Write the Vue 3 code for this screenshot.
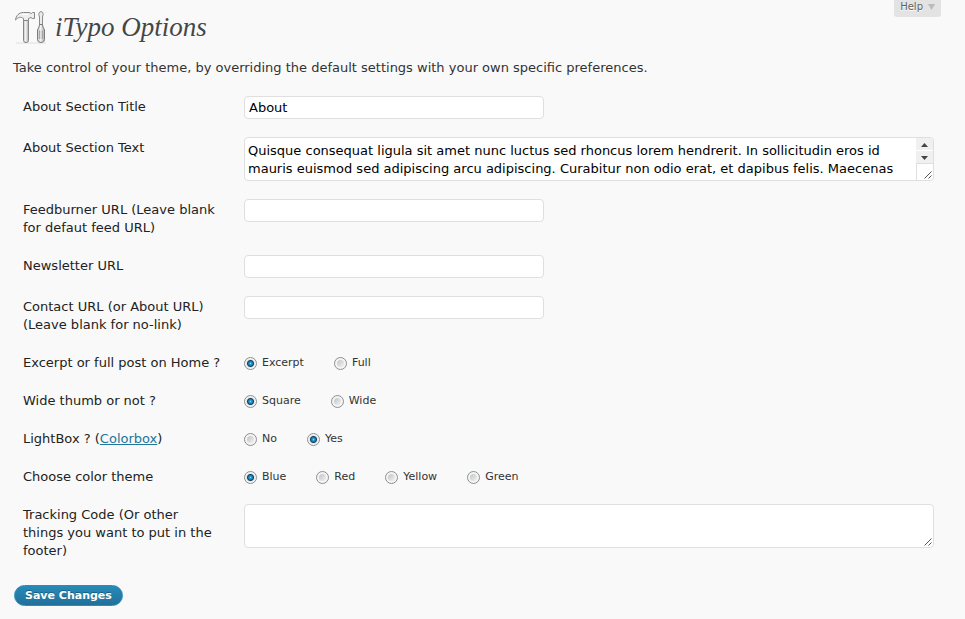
<script setup>
import { reactive } from 'vue'

const form = reactive({
  title: 'About',
  text: 'Quisque consequat ligula sit amet nunc luctus sed rhoncus lorem hendrerit. In sollicitudin eros id mauris euismod sed adipiscing arcu adipiscing. Curabitur non odio erat, et dapibus felis. Maecenas',
  feed: '',
  newsletter: '',
  contact: '',
  excerpt: 'Excerpt',
  thumb: 'Square',
  lightbox: 'Yes',
  color: 'Blue',
  tracking: '',
})

const rows = [
  { id: 'title', type: 'text', label: 'About Section Title' },
  { id: 'text', type: 'area', label: 'About Section Text', scroll: true },
  { id: 'feed', type: 'text', label: 'Feedburner URL (Leave blank for defaut feed URL)' },
  { id: 'newsletter', type: 'text', label: 'Newsletter URL' },
  { id: 'contact', type: 'text', label: 'Contact URL (or About URL) (Leave blank for no-link)' },
  { id: 'excerpt', type: 'radio', label: 'Excerpt or full post on Home ?', options: ['Excerpt', 'Full'] },
  { id: 'thumb', type: 'radio', label: 'Wide thumb or not ?', options: ['Square', 'Wide'] },
  { id: 'lightbox', type: 'radio', label: 'LightBox ?', link: 'Colorbox', options: ['No', 'Yes'] },
  { id: 'color', type: 'radio', label: 'Choose color theme', options: ['Blue', 'Red', 'Yellow', 'Green'] },
  { id: 'tracking', type: 'area', label: 'Tracking Code (Or other things you want to put in the footer)' },
]
</script>

<template>
  <main class="page">
    <button type="button" class="help">
      Help
      <svg width="7" height="6" viewBox="0 0 7 6" aria-hidden="true"><path d="M0 0H7L3.5 6Z" fill="#bbb" /></svg>
    </button>

    <header class="heading">
      <svg class="tools" width="34" height="34" viewBox="0 0 34 34" aria-hidden="true">
        <defs>
          <linearGradient id="metal" x1="0" x2="1" y1="0" y2="0">
            <stop offset="0" stop-color="#c4c4c4" />
            <stop offset="0.45" stop-color="#f4f4f4" />
            <stop offset="1" stop-color="#aaa" />
          </linearGradient>
        </defs>
        <path d="M3 33H33" stroke="#dedede" />
        <path d="M10.500 9.500H15.500V30.500Q15.500 32.500 13 32.500T10.500 30.500Z" fill="url(#metal)" stroke="#858585" />
        <path d="M2.500 10C3 5.500 6 2.500 10.500 2.500H16L18.500 3.500L19.500 2.500H21.500V8.500H19.500L18 7.500L15.500 8.500V10.500H10.500V8.500C7.500 6.500 5.500 7 2.500 10Z" fill="#eee" stroke="#858585" stroke-linejoin="round" />
        <path d="M9 4.500H15" stroke="#fff" />
        <path d="M28 1.500Q30.300 2 30.200 4.500L29.500 7V15H26.500V7L25.800 4.500Q25.700 2 28 1.500Z" fill="#ececec" stroke="#8b8b8b" />
        <path d="M26.500 14.500H29.500L30 17L31.500 20V29.500Q31.500 32.500 28 32.500T24.500 29.500V20L26 17Z" fill="url(#metal)" stroke="#7b7b7b" stroke-linejoin="round" />
        <path d="M26.700 20.500V29M29.300 20.500V29" stroke="#999" />
      </svg>
      <h1>iTypo Options</h1>
    </header>

    <p class="intro">Take control of your theme, by overriding the default settings with your own specific preferences.</p>

    <form @submit.prevent>
      <div v-for="row in rows" :key="row.id" class="row">
        <div v-if="row.type === 'radio'" :id="row.id + '-label'" class="label">
          {{ row.label }}
          <template v-if="row.link">(<a href="#colorbox">{{ row.link }}</a>)</template>
        </div>
        <label v-else class="label" :for="row.id">{{ row.label }}</label>

        <div v-if="row.type === 'radio'" class="radios" role="radiogroup" :aria-labelledby="row.id + '-label'">
          <label v-for="option in row.options" :key="option" class="option">
            <input v-model="form[row.id]" type="radio" :name="row.id" :value="option" />
            <span>{{ option }}</span>
          </label>
        </div>
        <div v-else-if="row.type === 'area'" class="area">
          <textarea :id="row.id" v-model="form[row.id]" :class="{ scrolling: row.scroll }" rows="2"></textarea>
          <svg v-if="row.scroll" class="scroller" width="17" height="42" viewBox="0 0 17 42" aria-hidden="true">
            <path d="M0 0H13Q17 0 17 4V26H0Z" fill="#f0f0f0" />
            <path d="M0 12.500H17" stroke="#fff" />
            <path d="M0.500 26V42M0 25.500H17" stroke="#dfdfdf" fill="none" />
            <path d="M5 9H12L8.500 5Z M5 18H12L8.500 22Z" fill="#444" />
          </svg>
          <svg class="grip" width="8" height="8" viewBox="0 0 8 8" aria-hidden="true">
            <path d="M0.500 7.500L7.500 0.500M4.500 7.500L7.500 4.500" stroke="#555" />
          </svg>
        </div>
        <div v-else class="field">
          <input :id="row.id" v-model="form[row.id]" type="text" />
        </div>
      </div>

      <button type="submit" class="save">Save Changes</button>
    </form>
  </main>
</template>

<style>
body {
  background: #f9f9f9;
}
</style>

<style scoped>
.page {
  position: relative;
  padding: 10px 31px 13px 13px;
  color: #333;
  font: 13px/18px "DejaVu Sans", Verdana, sans-serif;
}

.help {
  position: absolute;
  top: 0;
  right: 24px;
  display: flex;
  align-items: center;
  gap: 5px;
  height: 17px;
  padding: 0 6px 3px;
  border: 0;
  border-radius: 0 0 3px 3px;
  background: #e3e3e3;
  color: #606060;
  font: 10px/14px "DejaVu Sans", Verdana, sans-serif;
  text-shadow: 0 1px 0 #fff;
}

.heading {
  display: flex;
  align-items: center;
  gap: 8px;
  height: 34px;
}

h1 {
  margin: 0;
  color: #464646;
  font: italic 27px/34px "Liberation Serif", Georgia, serif;
  text-shadow: 0 1px 0 #fff;
}

.intro {
  margin: 15px 0 10px;
}

.row {
  display: grid;
  grid-template-columns: 198px minmax(0, 1fr);
  column-gap: 23px;
  padding-left: 10px;
}

.label {
  padding: 11px 0 9px;
  color: #222;
}

a {
  color: #21759b;
}

.field,
.area {
  padding: 9px 0;
}

.area {
  position: relative;
}

input[type="text"],
textarea {
  display: block;
  box-sizing: border-box;
  width: 100%;
  border: 1px solid #dfdfdf;
  border-radius: 4px;
  background: #fff;
  color: #000;
  font: 13px/18px "DejaVu Sans", Verdana, sans-serif;
}

input[type="text"] {
  max-width: 300px;
  height: 23px;
  padding: 1px 4px;
}

textarea {
  height: 44px;
  padding: 4px 3px 2px;
  overflow: hidden;
  resize: none;
}

.scrolling {
  padding-right: 20px;
}

.scroller {
  position: absolute;
  top: 10px;
  right: 1px;
}

.grip {
  position: absolute;
  top: 43px;
  right: 2px;
}

.radios {
  display: flex;
  gap: 30px;
  padding: 11px 0 9px;
}

.option {
  display: flex;
  gap: 5px;
  font-size: 11px;
}

.option input {
  appearance: none;
  box-sizing: border-box;
  width: 13px;
  height: 13px;
  margin: 3px 0 0;
  border: 1px solid #8e8f8f;
  border-radius: 50%;
  background: linear-gradient(135deg, #bfc3c8, #f2f2f2) content-box, #f4f4f4;
  padding: 2px;
}

.option input:checked {
  background: radial-gradient(circle, #8fdcf8 0, #2a9fd2 1px, #1b7fb3 2px, #12405f 3px, #e4e6e8 4px, #f6f6f6 5px) border-box;
}

.save {
  display: block;
  height: 21px;
  margin: 16px 0 0 1px;
  padding: 0 10px;
  border: 1px solid #298cba;
  border-radius: 11px;
  background: linear-gradient(#278ab7, #21709a);
  color: #fff;
  font: bold 11px/18px "DejaVu Sans", Verdana, sans-serif;
  text-shadow: 0 -1px 0 rgba(0, 0, 0, 0.3);
}
</style>
